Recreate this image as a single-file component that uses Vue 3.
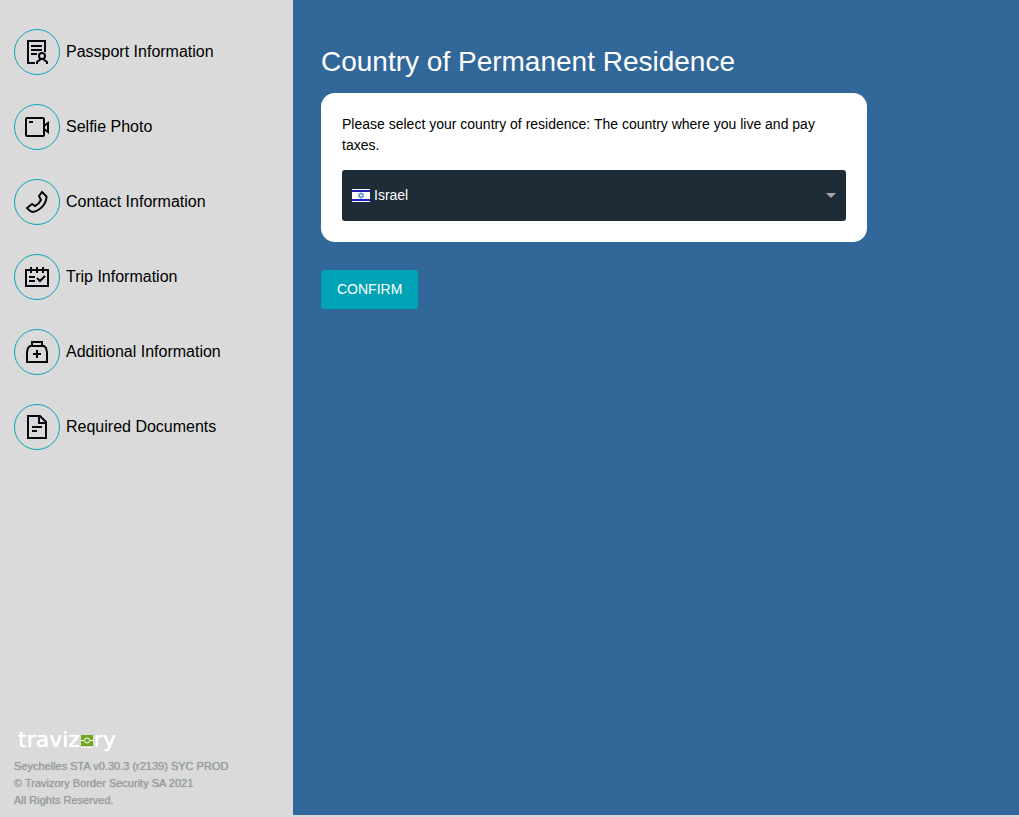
<script setup>
import { ref } from 'vue'

const country = ref('Israel')
const steps = [
  { id: 'passport', label: 'Passport Information' },
  { id: 'selfie', label: 'Selfie Photo' },
  { id: 'contact', label: 'Contact Information' },
  { id: 'trip', label: 'Trip Information' },
  { id: 'additional', label: 'Additional Information' },
  { id: 'documents', label: 'Required Documents' },
]
</script>

<template>
  <div class="page">
    <aside class="sidebar">
      <nav class="steps" aria-label="Application steps">
        <a v-for="step in steps" :key="step.id" class="step" :href="'#' + step.id">
          <span class="badge">
            <svg class="icon" viewBox="0 0 26 26" aria-hidden="true">
              <g v-if="step.id === 'passport'">
                <path d="M11 24H4V2h17v11M7 7h11M7 11h11M7 15h6" />
                <circle cx="18" cy="17" r="3" />
                <path d="M13 25v-2l4-3h2l4 3v2" />
              </g>
              <g v-else-if="step.id === 'selfie'">
                <rect x="2" y="4" width="18" height="18" rx="1" />
                <path d="M5 8h4M20 12l4-3v9l-4-3" />
              </g>
              <g v-else-if="step.id === 'contact'">
                <path d="M18 3L22.500 7.500C22.500 15 16 22 8.500 23L6 22L3 19L8 15L11 17Q15 15 17 11L15 7Z" />
              </g>
              <g v-else-if="step.id === 'trip'">
                <path d="M2 6h22v16H2ZM7 3v6M13 3v6M19 3v6M5 13h6M5 17h6M13 14l3 3l5-5" />
              </g>
              <g v-else-if="step.id === 'additional'">
                <path d="M8 7V3h10v4M6 7h14l2 2l1 4v10H3V13l1-4ZM13 11v8M9 15h8" />
              </g>
              <g v-else>
                <path d="M4 2h12l6 6v16H4ZM15 2v7h7M8 13h10M8 17h5" />
              </g>
            </svg>
          </span>
          <span>{{ step.label }}</span>
        </a>
      </nav>
      <footer class="footer">
        <div class="brand" aria-label="travizory">
          <span>traviz</span>
          <svg class="brand-mark" viewBox="0 0 12 14" aria-hidden="true">
            <rect width="12" height="11" fill="#6fa820" />
            <circle cx="6" cy="5.500" r="2.500" fill="none" stroke="#fff" />
            <path d="M0 5.500h3M9 5.500h3" stroke="#fff" />
            <path d="M0 12.500h12" stroke="#fff" stroke-dasharray="2 1" />
          </svg>
          <span>ry</span>
        </div>
        <div>Seychelles STA v0.30.3 (r2139) SYC PROD</div>
        <div>© Travizory Border Security SA 2021</div>
        <div>All Rights Reserved.</div>
      </footer>
    </aside>
    <main class="main">
      <h1>Country of Permanent Residence</h1>
      <form class="form" @submit.prevent>
        <section class="card">
          <label for="country">Please select your country of residence: The country where you live and pay taxes.</label>
          <div class="field">
            <select id="country" v-model="country">
              <option>Israel</option>
            </select>
            <svg class="flag" viewBox="0 0 18 13" aria-hidden="true">
              <rect width="18" height="13" fill="#fff" />
              <path d="M0 2h18M0 11h18" stroke="#2020b8" stroke-width="2" />
              <path d="M9 3.500l2.600 4.500H6.400ZM9 9.500L6.400 5h5.200Z" fill="none" stroke="#3979c5" stroke-width=".8" />
            </svg>
            <svg class="arrow" viewBox="0 0 10 5" aria-hidden="true"><path d="M0 0h10L5 5Z" fill="#aaa3aa" /></svg>
          </div>
        </section>
        <button type="submit">CONFIRM</button>
      </form>
    </main>
  </div>
</template>

<style>
body {
  background: #dadada;
}
</style>

<style scoped>
.page {
  display: flex;
  min-height: 100vh;
  font-family: "Liberation Sans", Arial, sans-serif;
  color: #000;
  background: #dadada;
}
.sidebar {
  box-sizing: border-box;
  flex: 0 0 293px;
  display: flex;
  flex-direction: column;
  justify-content: space-between;
  padding: 29px 14px 8px;
}
.steps {
  display: flex;
  flex-direction: column;
  gap: 29px;
}
.step {
  display: flex;
  align-items: center;
  gap: 6px;
  font-size: 16px;
  line-height: 20px;
  color: #000;
  text-decoration: none;
}
.badge {
  box-sizing: border-box;
  display: grid;
  place-items: center;
  width: 46px;
  height: 46px;
  border: 1px solid #08a4b8;
  border-radius: 50%;
}
.icon {
  width: 26px;
  height: 26px;
  fill: none;
  stroke: #05090d;
  stroke-width: 2;
}
.footer {
  font-size: 11px;
  line-height: 17px;
  color: #989e9e;
  text-shadow: 0 0 1px #989e9e;
}
.brand {
  display: flex;
  align-items: center;
  gap: 1px;
  padding-left: 4px;
  margin-bottom: 5px;
  font-family: "DejaVu Sans", sans-serif;
  font-size: 22px;
  line-height: 26px;
  color: #fff;
  text-shadow: 0 0 1px #fff;
}
.brand-mark {
  width: 12px;
  height: 14px;
  margin-top: 4px;
}
.main {
  flex: 1;
  min-width: 0;
  padding: 46px 28px;
  margin-bottom: 2px;
  background: #326799;
}
h1 {
  margin: 0 0 15px;
  font-size: 28px;
  line-height: 32px;
  font-weight: 400;
  color: #fff;
}
.form {
  display: flex;
  flex-direction: column;
  align-items: flex-start;
  gap: 28px;
}
.card {
  box-sizing: border-box;
  width: 100%;
  max-width: 546px;
  padding: 21px;
  border-radius: 14px;
  background: #fff;
}
label {
  display: block;
  margin-bottom: 14px;
  font-size: 14px;
  line-height: 21px;
}
.field {
  position: relative;
}
select {
  display: block;
  width: 100%;
  height: 51px;
  padding: 0 32px 2px;
  border: 0;
  border-radius: 3px;
  appearance: none;
  background: #1e2c38;
  color: #fff;
  font: inherit;
  font-size: 14px;
}
.flag {
  position: absolute;
  left: 10px;
  top: 19px;
  width: 18px;
  height: 13px;
  pointer-events: none;
}
.arrow {
  position: absolute;
  right: 10px;
  top: 23px;
  width: 10px;
  height: 5px;
  pointer-events: none;
}
button {
  height: 39px;
  padding: 0 16px 2px;
  border: 0;
  border-radius: 3px;
  background: #00a3b5;
  color: #fff;
  font: inherit;
  font-size: 14px;
}
</style>
